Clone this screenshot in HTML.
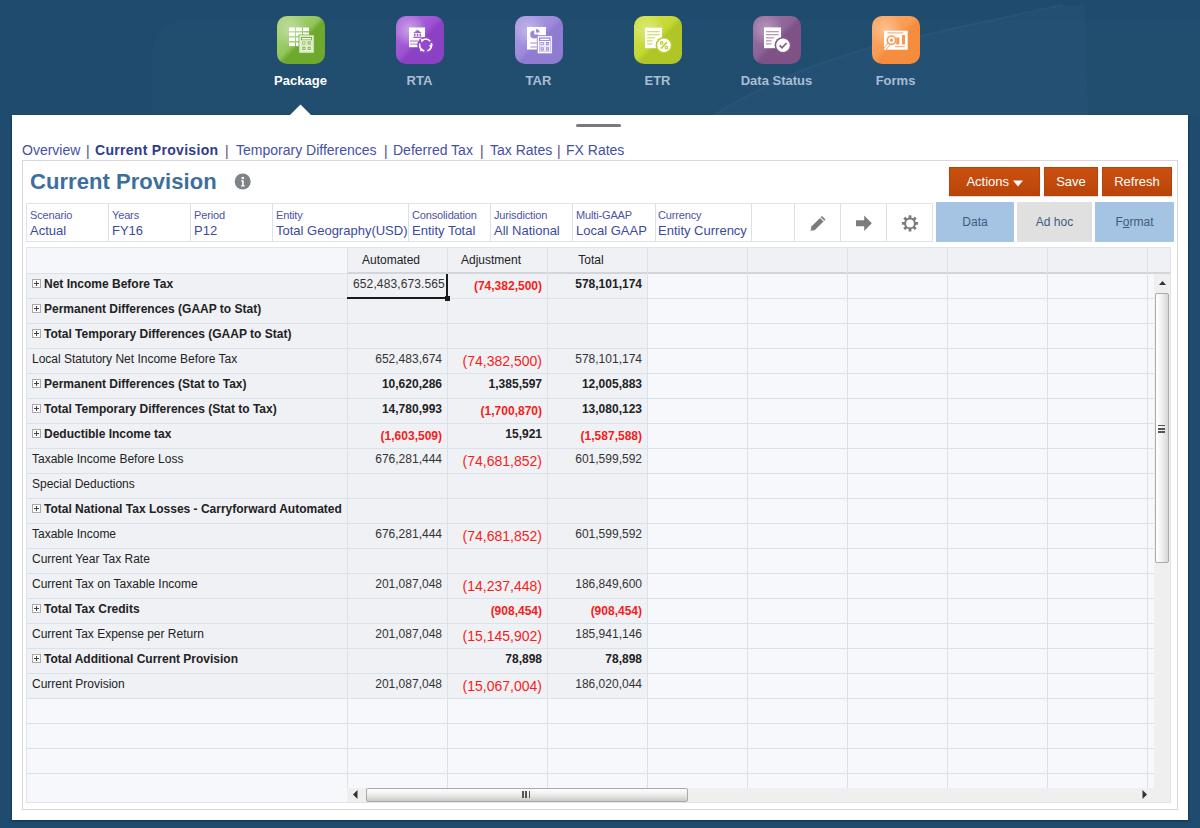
<!DOCTYPE html>
<html><head><meta charset="utf-8">
<style>
*{box-sizing:border-box;margin:0;padding:0}
html,body{width:1200px;height:828px;overflow:hidden}
body{background:#1f4b6e;font-family:"Liberation Sans",sans-serif;position:relative}
.abs{position:absolute}
.ic{position:absolute;top:16px;width:48px;height:48px;border-radius:10px;overflow:hidden}
.ic svg{position:absolute;left:0;top:0}
.lbl{position:absolute;top:73px;width:119px;text-align:center;font-size:13px;font-weight:bold;color:#a9bed3;line-height:15px;white-space:nowrap}
#panel{position:absolute;left:12px;top:115px;width:1176px;height:705px;background:#fff;box-shadow:0 1px 2px rgba(0,20,40,.5)}
.nav{position:absolute;top:142px;font-size:14px;line-height:16px;color:#4650a4;white-space:nowrap}
.sep{position:absolute;top:143px;font-size:14px;line-height:16px;color:#574878}
#card{position:absolute;left:22px;top:160px;width:1156px;height:650px;border:1px solid #d8d8d8;background:#fff}
.btn{position:absolute;top:167px;height:29px;background:linear-gradient(180deg,#c9500f 0%,#c24a0c 55%,#b8450b 100%);border:1px solid #b4440a;color:#fff;font-size:13px;line-height:27px;text-align:center;box-shadow:0 1px 1px rgba(0,0,0,.15)}
.pov{position:absolute;top:203px;height:39px;border:1px solid #dde4ec}
.pl{position:absolute;top:209px;font-size:11px;line-height:13px;color:#4d52a8;white-space:nowrap;letter-spacing:-0.15px}
.pv{position:absolute;top:223px;font-size:13px;line-height:16px;color:#3b4ba0;white-space:nowrap}
.tab{position:absolute;top:202px;height:40px;font-size:12px;line-height:40px;text-align:center;color:#3d5b7e}
.vl{position:absolute;width:1px;background:#d9e1e9}
.hl{position:absolute;height:1px;background:#d9e1e9}
.t{position:absolute;font-size:12px;line-height:15px;color:#222;white-space:nowrap}
.b{font-weight:bold}
.r{text-align:right}
.red{color:#f51d20}
.big{font-size:14px}
</style></head><body>

<!-- top icons -->
<svg class="abs" style="left:0;top:0" width="1200" height="116">
<path d="M152 116V60Q152 20 192 20H1200V116Z" fill="rgba(255,255,255,0.01)"/>
<path d="M712 116Q800 60 920 36Q1000 18 1062 5L1085 5L1088 116Z" fill="rgba(140,190,235,0.04)"/>
<path d="M712 116Q800 60 920 36Q1000 18 1062 5" fill="none" stroke="rgba(150,200,240,0.05)" stroke-width="2"/>
</svg>
<svg class="abs" style="left:277px;top:16px" width="48" height="48" viewBox="0 0 48 48">
<defs><linearGradient id="gp" x1="0" y1="0" x2="1" y2="1"><stop offset="0" stop-color="#b0d685"/><stop offset=".46" stop-color="#93c65a"/><stop offset=".54" stop-color="#6ea92e"/><stop offset="1" stop-color="#6ea92e"/></linearGradient>
<radialGradient id="hp" cx=".3" cy=".3" r=".35"><stop offset="0" stop-color="rgba(255,255,255,0.35)"/><stop offset="1" stop-color="rgba(255,255,255,0)"/></radialGradient></defs>
<rect x="0" y="0" width="48" height="48" rx="10" fill="url(#gp)"/>
<rect x="0" y="0" width="48" height="48" rx="10" fill="url(#hp)"/>
<rect x="12" y="11.5" width="6" height="3.6" fill="#fff"/><rect x="12" y="16.5" width="6" height="3.6" fill="#fff"/><rect x="12" y="21.5" width="6" height="3.6" fill="#fff"/><rect x="12" y="26.5" width="6" height="3.6" fill="#fff"/><rect x="19" y="11.5" width="6" height="3.6" fill="#fff"/><rect x="19" y="16.5" width="6" height="3.6" fill="#fff"/><rect x="19" y="21.5" width="6" height="3.6" fill="#fff"/><rect x="19" y="26.5" width="6" height="3.6" fill="#fff"/><rect x="26" y="11.5" width="6" height="3.6" fill="#fff"/><rect x="26" y="16.5" width="6" height="3.6" fill="#fff"/><rect x="26" y="21.5" width="6" height="3.6" fill="#fff"/><rect x="26" y="26.5" width="6" height="3.6" fill="#fff"/><rect x="21.5" y="18.5" width="16" height="19" fill="#79b438"/>
<rect x="23.1" y="20.1" width="12.8" height="15.8" fill="none" stroke="#fff" stroke-width="1.3"/>
<rect x="25.0" y="22.0" width="9" height="1.4" fill="#fff"/>
<rect x="24.7" y="24.8" width="4.3" height="4.3" fill="none" stroke="#fff" stroke-width="1"/>
<rect x="30.0" y="24.8" width="4.3" height="4.3" fill="none" stroke="#fff" stroke-width="1"/>
<rect x="24.7" y="30.1" width="4.3" height="4.3" fill="none" stroke="#fff" stroke-width="1"/>
<rect x="30.0" y="30.1" width="4.3" height="4.3" fill="none" stroke="#fff" stroke-width="1"/>
<path d="M25.8 26.95h2.1M26.85 25.9v2.1M31.1 26.95h2.1M25.8 32.25h2.1M31.1 32.25h2.1" stroke="#fff" stroke-width=".8"/>
</svg>
<svg class="abs" style="left:396px;top:16px" width="48" height="48" viewBox="0 0 48 48">
<defs><linearGradient id="gr" x1="0" y1="0" x2="1" y2="1"><stop offset="0" stop-color="#b071dc"/><stop offset=".46" stop-color="#9d52d2"/><stop offset=".54" stop-color="#8c40c4"/><stop offset="1" stop-color="#8c40c4"/></linearGradient>
<radialGradient id="hr" cx=".3" cy=".3" r=".35"><stop offset="0" stop-color="rgba(255,255,255,0.45)"/><stop offset="1" stop-color="rgba(255,255,255,0)"/></radialGradient></defs>
<rect x="0" y="0" width="48" height="48" rx="10" fill="url(#gr)"/>
<rect x="0" y="0" width="48" height="48" rx="10" fill="url(#hr)"/>
<rect x="13" y="11.5" width="16" height="19.7" fill="#fff"/>
<path d="M17.3 16.9L21.5 13.8L25.8 16.9z" fill="#a062d4"/><rect x="18" y="17.6" width="1.5" height="2.6" fill="#a062d4"/><rect x="20.75" y="17.6" width="1.5" height="2.6" fill="#a062d4"/><rect x="23.5" y="17.6" width="1.5" height="2.6" fill="#a062d4"/><rect x="17.3" y="20.7" width="8.5" height="1.3" fill="#a062d4"/>
<rect x="14" y="24.2" width="8" height="1.8" fill="#c8a6e6"/><rect x="14" y="27.3" width="8" height="1.5" fill="#c8a6e6"/>
<circle cx="29.6" cy="29.1" r="8.4" fill="#9549cc"/>
<circle cx="29.6" cy="29.1" r="6" fill="none" stroke="#fff" stroke-width="1.6" stroke-dasharray="9.5 3.07" transform="rotate(-20 29.6 29.1)"/>
<path d="M24.6 22.6l3.6 1.2-2.6 2.6z M36.6 28.6l-1.2 3.6-2.6-2.6z M24.2 35.6l0.2-3.8 3.2 2z" fill="#fff"/>
</svg>
<svg class="abs" style="left:515px;top:16px" width="48" height="48" viewBox="0 0 48 48">
<defs><linearGradient id="gt" x1="0" y1="0" x2="1" y2="1"><stop offset="0" stop-color="#ad9de4"/><stop offset=".46" stop-color="#9d8bda"/><stop offset=".54" stop-color="#8f7cd2"/><stop offset="1" stop-color="#8f7cd2"/></linearGradient>
<radialGradient id="ht" cx=".3" cy=".3" r=".35"><stop offset="0" stop-color="rgba(255,255,255,0.35)"/><stop offset="1" stop-color="rgba(255,255,255,0)"/></radialGradient></defs>
<rect x="0" y="0" width="48" height="48" rx="10" fill="url(#gt)"/>
<rect x="0" y="0" width="48" height="48" rx="10" fill="url(#ht)"/>
<rect x="12" y="11" width="19" height="22.5" fill="#fff"/>
<path d="M19.2 14.6a4 4 0 1 0 4 4h-4z" fill="#9a88d8"/><path d="M21 13v3.6h3.6A3.6 3.6 0 0 0 21 13z" fill="#9a88d8"/>
<rect x="15.3" y="26.4" width="6.5" height="1.3" fill="#b7aae5"/><rect x="15.3" y="30.3" width="6.5" height="1.3" fill="#b7aae5"/><rect x="21.8" y="19.2" width="16" height="19" fill="#9584d6"/>
<rect x="23.400000000000002" y="20.8" width="12.8" height="15.8" fill="none" stroke="#fff" stroke-width="1.3"/>
<rect x="25.3" y="22.7" width="9" height="1.4" fill="#fff"/>
<rect x="25.0" y="25.5" width="4.3" height="4.3" fill="none" stroke="#fff" stroke-width="1"/>
<rect x="30.3" y="25.5" width="4.3" height="4.3" fill="none" stroke="#fff" stroke-width="1"/>
<rect x="25.0" y="30.799999999999997" width="4.3" height="4.3" fill="none" stroke="#fff" stroke-width="1"/>
<rect x="30.3" y="30.799999999999997" width="4.3" height="4.3" fill="none" stroke="#fff" stroke-width="1"/>
<path d="M26.1 27.65h2.1M27.15 26.6v2.1M31.4 27.65h2.1M26.1 32.95h2.1M31.4 32.95h2.1" stroke="#fff" stroke-width=".8"/>
</svg>
<svg class="abs" style="left:634px;top:16px" width="48" height="48" viewBox="0 0 48 48">
<defs><linearGradient id="ge" x1="0" y1="0" x2="1" y2="1"><stop offset="0" stop-color="#d4e34a"/><stop offset=".46" stop-color="#c4d835"/><stop offset=".54" stop-color="#b1c626"/><stop offset="1" stop-color="#b1c626"/></linearGradient>
<radialGradient id="he" cx=".3" cy=".3" r=".35"><stop offset="0" stop-color="rgba(255,255,255,0.35)"/><stop offset="1" stop-color="rgba(255,255,255,0)"/></radialGradient></defs>
<rect x="0" y="0" width="48" height="48" rx="10" fill="url(#ge)"/>
<rect x="0" y="0" width="48" height="48" rx="10" fill="url(#he)"/>
<rect x="11" y="11.7" width="17" height="20.5" fill="#fff"/>
<rect x="13" y="15" width="12.7" height="1.3" fill="#d5e06a"/><rect x="13" y="18" width="12.7" height="1.3" fill="#d5e06a"/><rect x="13" y="21.2" width="8" height="1.3" fill="#d5e06a"/><rect x="13" y="24.2" width="5.5" height="1.3" fill="#d5e06a"/><rect x="13" y="27.2" width="5.5" height="1.3" fill="#d5e06a"/>
<circle cx="30" cy="29.3" r="8.4" fill="#b9cd2c"/><circle cx="30" cy="29.3" r="6.8" fill="#fff"/>
<path d="M33 26.2l-6 6.2" stroke="#b9cd2c" stroke-width="1.5"/><circle cx="27.6" cy="26.9" r="1.3" fill="none" stroke="#b9cd2c" stroke-width="1.1"/><circle cx="32.4" cy="31.7" r="1.3" fill="none" stroke="#b9cd2c" stroke-width="1.1"/>
</svg>
<svg class="abs" style="left:753px;top:16px" width="48" height="48" viewBox="0 0 48 48">
<defs><linearGradient id="gd" x1="0" y1="0" x2="1" y2="1"><stop offset="0" stop-color="#9d76a6"/><stop offset=".46" stop-color="#8c6396"/><stop offset=".54" stop-color="#7e5187"/><stop offset="1" stop-color="#7e5187"/></linearGradient>
<radialGradient id="hd" cx=".3" cy=".3" r=".35"><stop offset="0" stop-color="rgba(255,255,255,0.35)"/><stop offset="1" stop-color="rgba(255,255,255,0)"/></radialGradient></defs>
<rect x="0" y="0" width="48" height="48" rx="10" fill="url(#gd)"/>
<rect x="0" y="0" width="48" height="48" rx="10" fill="url(#hd)"/>
<rect x="11" y="11.4" width="17" height="20.8" fill="#fff"/>
<rect x="13" y="15" width="12.7" height="1.3" fill="#b39bb8"/><rect x="13" y="18" width="12.7" height="1.3" fill="#b39bb8"/><rect x="13" y="21.2" width="8" height="1.3" fill="#b39bb8"/><rect x="13" y="24.2" width="5.5" height="1.3" fill="#b39bb8"/><rect x="13" y="27.2" width="5.5" height="1.3" fill="#b39bb8"/>
<circle cx="30" cy="29.3" r="8.4" fill="#845a8e"/><circle cx="30" cy="29.3" r="6.8" fill="#fff"/>
<path d="M26.6 29.4l2.4 2.4 4.6-4.8" fill="none" stroke="#845a8e" stroke-width="1.7"/>
</svg>
<svg class="abs" style="left:872px;top:16px" width="48" height="48" viewBox="0 0 48 48">
<defs><linearGradient id="gf" x1="0" y1="0" x2="1" y2="1"><stop offset="0" stop-color="#fbab6a"/><stop offset=".46" stop-color="#f89b52"/><stop offset=".54" stop-color="#f58c3e"/><stop offset="1" stop-color="#f58c3e"/></linearGradient>
<radialGradient id="hf" cx=".3" cy=".3" r=".35"><stop offset="0" stop-color="rgba(255,255,255,0.35)"/><stop offset="1" stop-color="rgba(255,255,255,0)"/></radialGradient></defs>
<rect x="0" y="0" width="48" height="48" rx="10" fill="url(#gf)"/>
<rect x="0" y="0" width="48" height="48" rx="10" fill="url(#hf)"/>
<rect x="12" y="14.7" width="23.7" height="19" fill="#fff"/>
<rect x="15.5" y="16.4" width="16" height="1" fill="#f9a463"/>
<path d="M17 27.8l-4.5 6" stroke="#f8a060" stroke-width="3.2"/><path d="M17 27.8l-4.5 6" stroke="#fff" stroke-width="1.6"/>
<circle cx="19.5" cy="24.2" r="4.2" fill="#fff" stroke="#f89c58" stroke-width="1.7"/><circle cx="19.5" cy="24.2" r="1.6" fill="#f89c58"/>
<rect x="24.2" y="21.5" width="3.2" height="7" fill="#f89a55"/><rect x="30" y="19" width="3" height="9.5" fill="#f89a55"/>
<rect x="23" y="30.2" width="10" height="1" fill="#f9a463"/>
</svg>

<div class="lbl" style="left:241px;color:#fff">Package</div>
<div class="lbl" style="left:360px">RTA</div>
<div class="lbl" style="left:479px">TAR</div>
<div class="lbl" style="left:598px">ETR</div>
<div class="lbl" style="left:717px">Data Status</div>
<div class="lbl" style="left:836px">Forms</div>

<!-- pointer -->

<div id="panel"></div>
<svg class="abs" style="left:289px;top:104px" width="23" height="12"><polygon points="0,12 11.5,0.5 23,12" fill="#fff"/></svg>
<div class="abs" style="left:576px;top:124px;width:45px;height:3px;border-radius:2px;background:#7a7a7a"></div>

<!-- nav -->
<div class="nav" style="left:22px">Overview</div>
<div class="sep" style="left:86px">|</div>
<div class="nav" style="left:95px;font-weight:bold;color:#2e3b8e;letter-spacing:0.3px">Current Provision</div>
<div class="sep" style="left:225px">|</div>
<div class="nav" style="left:236px">Temporary Differences</div>
<div class="sep" style="left:384px">|</div>
<div class="nav" style="left:393px">Deferred Tax</div>
<div class="sep" style="left:480px">|</div>
<div class="nav" style="left:490px">Tax Rates</div>
<div class="sep" style="left:557px">|</div>
<div class="nav" style="left:566px">FX Rates</div>

<div id="card"></div>

<div class="abs" style="left:30px;top:169px;font-size:22px;line-height:26px;font-weight:bold;color:#3c6f9d;letter-spacing:0.05px">Current Provision</div>
<svg class="abs" style="left:234px;top:172.5px" width="17" height="17" viewBox="0 0 17 17"><circle cx="8.7" cy="8.5" r="8" fill="#7f8389"/><circle cx="8.8" cy="5" r="1.35" fill="#fff"/><path d="M7.1 7.3h2.6v4.9h1v1.2H7.1v-1.2h1V8.5h-1z" fill="#fff"/></svg>
<div class="btn" style="left:949px;width:91px">Actions <svg width="10" height="7" style="vertical-align:-1px;margin-left:0px"><polygon points="0,0.5 10,0.5 5,6.5" fill="#fff"/></svg></div>
<div class="btn" style="left:1044px;width:54px">Save</div>
<div class="btn" style="left:1102px;width:70px">Refresh</div>
<div class="pov" style="left:26px;width:907px"></div>
<div class="vl" style="left:108px;top:204px;height:37px"></div>
<div class="vl" style="left:190px;top:204px;height:37px"></div>
<div class="vl" style="left:272px;top:204px;height:37px"></div>
<div class="vl" style="left:408px;top:204px;height:37px"></div>
<div class="vl" style="left:490px;top:204px;height:37px"></div>
<div class="vl" style="left:572px;top:204px;height:37px"></div>
<div class="vl" style="left:655px;top:204px;height:37px"></div>
<div class="vl" style="left:751px;top:204px;height:37px"></div>
<div class="vl" style="left:794px;top:204px;height:37px"></div>
<div class="vl" style="left:840px;top:204px;height:37px"></div>
<div class="vl" style="left:886px;top:204px;height:37px"></div>
<div class="pl" style="left:30px">Scenario</div><div class="pv" style="left:30px">Actual</div>
<div class="pl" style="left:112px">Years</div><div class="pv" style="left:112px">FY16</div>
<div class="pl" style="left:194px">Period</div><div class="pv" style="left:194px">P12</div>
<div class="pl" style="left:276px">Entity</div><div class="pv" style="left:276px">Total Geography(USD)</div>
<div class="pl" style="left:412px">Consolidation</div><div class="pv" style="left:412px">Entity Total</div>
<div class="pl" style="left:494px">Jurisdiction</div><div class="pv" style="left:494px">All National</div>
<div class="pl" style="left:576px">Multi-GAAP</div><div class="pv" style="left:576px">Local GAAP</div>
<div class="pl" style="left:658px">Currency</div><div class="pv" style="left:658px">Entity Currency</div>
<svg class="abs" style="left:808px;top:213px" width="20" height="20" viewBox="0 0 20 20"><path d="M2.3 18.2l1.1-4.6L14 3l3.5 3.5L6.9 17.1z" fill="#7a7c80"/><path d="M12.4 4.6l3.5 3.5" stroke="#fff" stroke-width="1.1"/><path d="M2.3 18.2l1.5-1.5" stroke="#fff" stroke-width=".9"/></svg>
<svg class="abs" style="left:855px;top:215px" width="18" height="17" viewBox="0 0 18 17"><path d="M1 5.3h8.2V0.5L16.8 8.3 9.2 16V11.3H1z" fill="#7a7c80"/></svg>
<svg class="abs" style="left:900px;top:213px" width="20" height="20" viewBox="0 0 20 20"><g fill="#7a7c80"><circle cx="10" cy="10.4" r="5.9"/><rect x="8.6" y="2.3" width="2.8" height="16.2" rx=".5"/><rect x="8.6" y="2.3" width="2.8" height="16.2" rx=".5" transform="rotate(45 10 10.4)"/><rect x="8.6" y="2.3" width="2.8" height="16.2" rx=".5" transform="rotate(90 10 10.4)"/><rect x="8.6" y="2.3" width="2.8" height="16.2" rx=".5" transform="rotate(135 10 10.4)"/></g><circle cx="10" cy="10.4" r="3.9" fill="#fff"/></svg>
<div class="tab" style="left:936px;width:78px;background:#a5c4e4">Data</div>
<div class="tab" style="left:1017px;width:75px;background:#e0e0e0">Ad hoc</div>
<div class="tab" style="left:1095px;width:79px;background:#a5c4e4">F<u>o</u>rmat</div>
<div class="abs" style="left:26px;top:247px;width:1145px;height:556px;background:#f6f8fb;border:1px solid #dde4ec"></div>
<div class="abs" style="left:347px;top:248px;width:823px;height:25px;background:#eff1f5"></div>
<div class="abs" style="left:27px;top:248px;width:320px;height:25px;background:#f5f7fa"></div>
<div class="abs" style="left:27px;top:273px;width:620px;height:425px;background:#eff1f5"></div>
<div class="abs" style="left:347px;top:272px;width:823px;height:2px;background:#d2d5d9"></div>
<div class="hl" style="left:27px;top:273px;width:320px"></div>
<div class="hl" style="left:27px;top:298px;width:1127px"></div>
<div class="hl" style="left:27px;top:323px;width:1127px"></div>
<div class="hl" style="left:27px;top:348px;width:1127px"></div>
<div class="hl" style="left:27px;top:373px;width:1127px"></div>
<div class="hl" style="left:27px;top:398px;width:1127px"></div>
<div class="hl" style="left:27px;top:423px;width:1127px"></div>
<div class="hl" style="left:27px;top:448px;width:1127px"></div>
<div class="hl" style="left:27px;top:473px;width:1127px"></div>
<div class="hl" style="left:27px;top:498px;width:1127px"></div>
<div class="hl" style="left:27px;top:523px;width:1127px"></div>
<div class="hl" style="left:27px;top:548px;width:1127px"></div>
<div class="hl" style="left:27px;top:573px;width:1127px"></div>
<div class="hl" style="left:27px;top:598px;width:1127px"></div>
<div class="hl" style="left:27px;top:623px;width:1127px"></div>
<div class="hl" style="left:27px;top:648px;width:1127px"></div>
<div class="hl" style="left:27px;top:673px;width:1127px"></div>
<div class="hl" style="left:27px;top:698px;width:1127px"></div>
<div class="hl" style="left:27px;top:723px;width:1127px"></div>
<div class="hl" style="left:27px;top:748px;width:1127px"></div>
<div class="hl" style="left:27px;top:773px;width:1127px"></div>
<div class="vl" style="left:347px;top:248px;height:554px"></div>
<div class="vl" style="left:447px;top:248px;height:554px"></div>
<div class="vl" style="left:547px;top:248px;height:554px"></div>
<div class="vl" style="left:647px;top:248px;height:554px"></div>
<div class="vl" style="left:747px;top:248px;height:554px"></div>
<div class="vl" style="left:847px;top:248px;height:554px"></div>
<div class="vl" style="left:947px;top:248px;height:554px"></div>
<div class="vl" style="left:1047px;top:248px;height:554px"></div>
<div class="vl" style="left:1147px;top:248px;height:554px"></div>
<svg class="abs" style="left:32px;top:279px" width="9" height="9" viewBox="0 0 9 9"><rect x=".5" y=".5" width="8" height="8" fill="#fafafa" stroke="#aaa"/><path d="M2 4.5h5M4.5 2v5" stroke="#444"/></svg>
<div class="t b" style="left:44px;top:277px">Net Income Before Tax</div>
<div class="t" style="left:353px;top:277px;color:#333;width:93px;overflow:hidden;letter-spacing:0.12px">652,483,673.565</div>
<div class="t r b red" style="left:392px;width:150px;top:277px;margin-top:2px;">(74,382,500)</div>
<div class="t r b" style="left:492px;width:150px;top:277px;">578,101,174</div>
<svg class="abs" style="left:32px;top:304px" width="9" height="9" viewBox="0 0 9 9"><rect x=".5" y=".5" width="8" height="8" fill="#fafafa" stroke="#aaa"/><path d="M2 4.5h5M4.5 2v5" stroke="#444"/></svg>
<div class="t b" style="left:44px;top:302px">Permanent Differences (GAAP to Stat)</div>
<svg class="abs" style="left:32px;top:329px" width="9" height="9" viewBox="0 0 9 9"><rect x=".5" y=".5" width="8" height="8" fill="#fafafa" stroke="#aaa"/><path d="M2 4.5h5M4.5 2v5" stroke="#444"/></svg>
<div class="t b" style="left:44px;top:327px">Total Temporary Differences (GAAP to Stat)</div>
<div class="t" style="left:32px;top:352px">Local Statutory Net Income Before Tax</div>
<div class="t r" style="left:292px;width:150px;top:352px;color:#333;">652,483,674</div>
<div class="t r red big" style="left:392px;width:150px;top:352px;margin-top:2px;">(74,382,500)</div>
<div class="t r" style="left:492px;width:150px;top:352px;color:#333;">578,101,174</div>
<svg class="abs" style="left:32px;top:379px" width="9" height="9" viewBox="0 0 9 9"><rect x=".5" y=".5" width="8" height="8" fill="#fafafa" stroke="#aaa"/><path d="M2 4.5h5M4.5 2v5" stroke="#444"/></svg>
<div class="t b" style="left:44px;top:377px">Permanent Differences (Stat to Tax)</div>
<div class="t r b" style="left:292px;width:150px;top:377px;">10,620,286</div>
<div class="t r b" style="left:392px;width:150px;top:377px;">1,385,597</div>
<div class="t r b" style="left:492px;width:150px;top:377px;">12,005,883</div>
<svg class="abs" style="left:32px;top:404px" width="9" height="9" viewBox="0 0 9 9"><rect x=".5" y=".5" width="8" height="8" fill="#fafafa" stroke="#aaa"/><path d="M2 4.5h5M4.5 2v5" stroke="#444"/></svg>
<div class="t b" style="left:44px;top:402px">Total Temporary Differences (Stat to Tax)</div>
<div class="t r b" style="left:292px;width:150px;top:402px;">14,780,993</div>
<div class="t r b red" style="left:392px;width:150px;top:402px;margin-top:2px;">(1,700,870)</div>
<div class="t r b" style="left:492px;width:150px;top:402px;">13,080,123</div>
<svg class="abs" style="left:32px;top:429px" width="9" height="9" viewBox="0 0 9 9"><rect x=".5" y=".5" width="8" height="8" fill="#fafafa" stroke="#aaa"/><path d="M2 4.5h5M4.5 2v5" stroke="#444"/></svg>
<div class="t b" style="left:44px;top:427px">Deductible Income tax</div>
<div class="t r b red" style="left:292px;width:150px;top:427px;margin-top:2px;">(1,603,509)</div>
<div class="t r b" style="left:392px;width:150px;top:427px;">15,921</div>
<div class="t r b red" style="left:492px;width:150px;top:427px;margin-top:2px;">(1,587,588)</div>
<div class="t" style="left:32px;top:452px">Taxable Income Before Loss</div>
<div class="t r" style="left:292px;width:150px;top:452px;color:#333;">676,281,444</div>
<div class="t r red big" style="left:392px;width:150px;top:452px;margin-top:2px;">(74,681,852)</div>
<div class="t r" style="left:492px;width:150px;top:452px;color:#333;">601,599,592</div>
<div class="t" style="left:32px;top:477px">Special Deductions</div>
<svg class="abs" style="left:32px;top:504px" width="9" height="9" viewBox="0 0 9 9"><rect x=".5" y=".5" width="8" height="8" fill="#fafafa" stroke="#aaa"/><path d="M2 4.5h5M4.5 2v5" stroke="#444"/></svg>
<div class="t b" style="left:44px;top:502px">Total National Tax Losses - Carryforward Automated</div>
<div class="t" style="left:32px;top:527px">Taxable Income</div>
<div class="t r" style="left:292px;width:150px;top:527px;color:#333;">676,281,444</div>
<div class="t r red big" style="left:392px;width:150px;top:527px;margin-top:2px;">(74,681,852)</div>
<div class="t r" style="left:492px;width:150px;top:527px;color:#333;">601,599,592</div>
<div class="t" style="left:32px;top:552px">Current Year Tax Rate</div>
<div class="t" style="left:32px;top:577px">Current Tax on Taxable Income</div>
<div class="t r" style="left:292px;width:150px;top:577px;color:#333;">201,087,048</div>
<div class="t r red big" style="left:392px;width:150px;top:577px;margin-top:2px;">(14,237,448)</div>
<div class="t r" style="left:492px;width:150px;top:577px;color:#333;">186,849,600</div>
<svg class="abs" style="left:32px;top:604px" width="9" height="9" viewBox="0 0 9 9"><rect x=".5" y=".5" width="8" height="8" fill="#fafafa" stroke="#aaa"/><path d="M2 4.5h5M4.5 2v5" stroke="#444"/></svg>
<div class="t b" style="left:44px;top:602px">Total Tax Credits</div>
<div class="t r b red" style="left:392px;width:150px;top:602px;margin-top:2px;">(908,454)</div>
<div class="t r b red" style="left:492px;width:150px;top:602px;margin-top:2px;">(908,454)</div>
<div class="t" style="left:32px;top:627px">Current Tax Expense per Return</div>
<div class="t r" style="left:292px;width:150px;top:627px;color:#333;">201,087,048</div>
<div class="t r red big" style="left:392px;width:150px;top:627px;margin-top:2px;">(15,145,902)</div>
<div class="t r" style="left:492px;width:150px;top:627px;color:#333;">185,941,146</div>
<svg class="abs" style="left:32px;top:654px" width="9" height="9" viewBox="0 0 9 9"><rect x=".5" y=".5" width="8" height="8" fill="#fafafa" stroke="#aaa"/><path d="M2 4.5h5M4.5 2v5" stroke="#444"/></svg>
<div class="t b" style="left:44px;top:652px">Total Additional Current Provision</div>
<div class="t r b" style="left:392px;width:150px;top:652px;">78,898</div>
<div class="t r b" style="left:492px;width:150px;top:652px;">78,898</div>
<div class="t" style="left:32px;top:677px">Current Provision</div>
<div class="t r" style="left:292px;width:150px;top:677px;color:#333;">201,087,048</div>
<div class="t r red big" style="left:392px;width:150px;top:677px;margin-top:2px;">(15,067,004)</div>
<div class="t r" style="left:492px;width:150px;top:677px;color:#333;">186,020,044</div>
<div class="abs" style="left:347px;top:297px;width:101px;height:2px;background:#1a1a1a"></div>
<div class="abs" style="left:446px;top:274px;width:2px;height:24px;background:#1a1a1a"></div>
<div class="abs" style="left:445px;top:296px;width:5px;height:5px;background:#1a1a1a"></div>
<div class="t" style="left:331px;width:120px;text-align:center;top:253px;color:#222">Automated</div>
<div class="t" style="left:431px;width:120px;text-align:center;top:253px;color:#222">Adjustment</div>
<div class="t" style="left:531px;width:120px;text-align:center;top:253px;color:#222">Total</div>
<div class="abs" style="left:1154px;top:274px;width:16px;height:528px;background:#efefef"></div>
<svg class="abs" style="left:1158px;top:280px" width="9" height="6"><polygon points="1,5 4.5,1 8,5" fill="#333"/></svg>
<div class="abs" style="left:1155px;top:293px;width:14px;height:270px;border:1px solid #aaa;border-radius:2px;background:linear-gradient(90deg,#fff 0%,#f4f4f4 40%,#d8d8d8 100%)"></div>
<div class="abs" style="left:1158px;top:424.5px;width:6.5px;height:8px;background:repeating-linear-gradient(180deg,#555 0 1.5px,transparent 1.5px 3.2px)"></div>
<div class="abs" style="left:347px;top:788px;width:807px;height:14px;background:#efefef"></div>
<svg class="abs" style="left:352px;top:790px" width="6" height="9"><polygon points="5.5,0 1,4.5 5.5,9" fill="#333"/></svg>
<svg class="abs" style="left:1142px;top:790px" width="6" height="9"><polygon points="0.5,0 5,4.5 0.5,9" fill="#333"/></svg>
<div class="abs" style="left:366px;top:788px;width:322px;height:14px;border:1px solid #aaa;border-radius:2px;background:linear-gradient(180deg,#fdfdfd 0%,#eeeeee 45%,#cacaca 100%)"></div>
<div class="abs" style="left:522px;top:791px;width:8px;height:6.5px;background:repeating-linear-gradient(90deg,#555 0 1.5px,transparent 1.5px 3.3px)"></div>
</body></html>
